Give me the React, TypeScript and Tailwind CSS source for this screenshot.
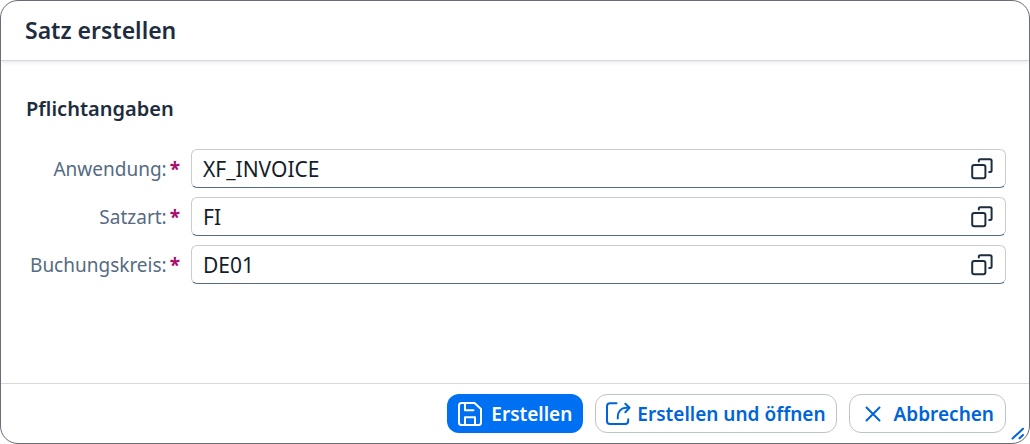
import React, { useState } from 'react';

const FIELDS = [
  { id: 'application', label: 'Anwendung:', value: 'XF_INVOICE' },
  { id: 'recordType', label: 'Satzart:', value: 'FI' },
  { id: 'companyCode', label: 'Buchungskreis:', value: 'DE01' },
];

function ValueHelpIcon() {
  return (
    <svg width="22" height="22" viewBox="0 0 22 22" fill="none" stroke="currentColor" strokeWidth="2" strokeLinecap="round" strokeLinejoin="round" aria-hidden="true">
      <rect x="1.2" y="7" width="13.2" height="13.2" rx="2" />
      <path d="M7.8 3.4V2.7a1.5 1.5 0 0 1 1.5-1.5h9.800a1.5 1.5 0 0 1 1.5 1.5v9.9a1.5 1.5 0 0 1-1.5 1.5h-.9" />
    </svg>
  );
}

function SaveIcon() {
  return (
    <svg width="26" height="26" viewBox="0 0 26 26" fill="none" stroke="currentColor" strokeWidth="2" strokeLinecap="round" strokeLinejoin="round" aria-hidden="true">
      <path d="M4.5 2h13L24 8v13.5a2.5 2.5 0 0 1-2.5 2.5h-17A2.5 2.5 0 0 1 2 21.5V4.5A2.5 2.5 0 0 1 4.500 2Z" />
      <path d="M8 2.5v6.7h8.5" />
      <path d="M8 23.5v-7.3h10v7.3" />
    </svg>
  );
}

function ShareIcon() {
  return (
    <svg width="26" height="26" viewBox="0 0 26 26" fill="none" stroke="currentColor" strokeWidth="2" strokeLinecap="round" strokeLinejoin="round" aria-hidden="true">
      <path d="M11.5 2.200H5a3 3 0 0 0-3 3v14.800a3 3 0 0 0 3 3h15.200a3 3 0 0 0 3-3v-1.800" />
      <path d="M12.8 17.5v-1.7c0-5.200 3.200-9 8.400-9h3" />
      <path d="M20.300 2.800l4.200 4-4.200 4.400" />
    </svg>
  );
}

function CloseIcon() {
  return (
    <svg width="16" height="16" viewBox="0 0 16 16" fill="none" stroke="currentColor" strokeWidth="2" strokeLinecap="round" aria-hidden="true">
      <path d="M1.5 1.5l13 13M14.5 1.5l-13 13" />
    </svg>
  );
}

export default function App() {
  const [values, setValues] = useState<Record<string, string>>(
    Object.fromEntries(FIELDS.map((field) => [field.id, field.value]))
  );

  return (
    <div className="min-h-screen bg-white flex font-['Noto_Sans',sans-serif] text-[19px] leading-6">
      <form
        role="dialog"
        aria-labelledby="dialog-title"
        className="relative flex-1 min-w-0 flex flex-col bg-white border border-[#6a6d76] rounded-[18px] overflow-hidden"
        onSubmit={(e) => e.preventDefault()}
      >
        <header className="h-[60px] px-6 pb-[2px] flex items-center border-b border-[#d5d7da] shadow-[0_1px_4px_rgba(34,53,72,0.14)]">
          <h1 id="dialog-title" className="text-[23px] font-semibold text-[#1d2d3e]">Satz erstellen</h1>
        </header>

        <main className="flex-1 pl-[25px] pr-[23px] py-9">
          <h2 className="text-[20px] font-semibold text-[#1d2d3e]">Pflichtangaben</h2>
          <div className="mt-7 flex flex-col gap-[9px]">
            {FIELDS.map((field) => (
              <div key={field.id} className="flex items-center gap-[11px]">
                <label htmlFor={field.id} className="w-[154px] shrink-0 flex justify-end gap-[3px] whitespace-nowrap text-[#556b82]">
                  {field.label}
                  <span className="font-bold text-[#aa0c6d]" aria-hidden="true">*</span>
                </label>
                <div className="flex-1 min-w-0 h-[39px] flex items-center border border-[#c9ccd1] border-b-[#556b82] rounded-md bg-white">
                  <input
                    id={field.id}
                    type="text"
                    required
                    value={values[field.id]}
                    onChange={(e) => setValues({ ...values, [field.id]: e.target.value })}
                    className="flex-1 min-w-0 h-full pl-[11px] bg-transparent outline-none text-[21px] text-[#131e29]"
                  />
                  <button type="button" aria-label="Wertehilfe" className="h-full px-3 flex items-center text-[#1d2d3e]">
                    <ValueHelpIcon />
                  </button>
                </div>
              </div>
            ))}
          </div>
        </main>

        <footer className="h-[60px] pl-6 pr-[23px] flex items-center justify-end gap-3 border-t border-[#d9d9d9] font-semibold whitespace-nowrap">
          <button type="submit" className="h-[39px] pl-[10px] pr-[11px] flex items-center gap-2 rounded-xl bg-[#0070f2] text-white">
            <SaveIcon />
            Erstellen
          </button>
          <button type="button" className="h-[39px] pl-[9px] pr-[10px] flex items-center gap-[6px] rounded-xl border border-[#bcc3ca] bg-white text-[#0064d9]">
            <ShareIcon />
            Erstellen und öffnen
          </button>
          <button type="button" className="h-[39px] pl-[15px] pr-[11px] flex items-center gap-[13px] rounded-xl border border-[#bcc3ca] bg-white text-[#0064d9]">
            <CloseIcon />
            Abbrechen
          </button>
        </footer>

        <svg className="absolute right-1 bottom-[3px] text-[#0064d9] cursor-nwse-resize" width="14" height="13" viewBox="0 0 14 13" fill="none" stroke="currentColor" strokeWidth="2" strokeLinecap="round" aria-hidden="true">
          <path d="M1.5 11.5L12 1.8M8.500 11.3l3.500-3.300" />
        </svg>
      </form>
    </div>
  );
}
